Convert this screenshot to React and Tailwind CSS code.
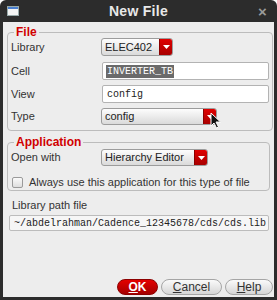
import React, { useState } from 'react';

const Dropdown = ({ value, width, height = 'h-[18px]' }) => (
  <div
    className={`${width} ${height} flex items-stretch rounded-[3px] border border-[#9c9c9c] bg-gradient-to-b from-[#fdfdfd] to-[#dadada] overflow-hidden`}
  >
    <span className="flex-1 pl-[3px] text-[11px] flex items-center text-[#222] whitespace-nowrap">{value}</span>
    <span className="w-[13px] flex items-center justify-center bg-gradient-to-b from-[#e00000] to-[#a80000] border-l border-[#8a0000]">
      <svg width="7" height="4" viewBox="0 0 7 4">
        <path d="M0 0h7L3.5 4z" fill="#fff" />
      </svg>
    </span>
  </div>
);

const Row = ({ label, children, className = '' }) => (
  <div className={`flex items-center ${className}`}>
    <span className="w-[90px] shrink-0 text-[11px] leading-none text-[#333]">{label}</span>
    {children}
  </div>
);

const Group = ({ title, children, className = '' }) => (
  <fieldset className={`border border-[#bcbcbc] rounded-[4px] px-[3px] ${className}`}>
    <legend className="ml-[3px] px-[2px] text-[12px] leading-[12px] font-bold text-[#d10000]">{title}</legend>
    {children}
  </fieldset>
);

const PillButton = ({ first, rest, primary, width }) => (
  <button
    className={`${width} h-[16px] rounded-full text-[12px] leading-[14px] border ${
      primary
        ? 'bg-gradient-to-b from-[#e40000] to-[#a50000] border-[#8c0000] text-white font-bold'
        : 'bg-gradient-to-b from-[#fafafa] to-[#d6d6d6] border-[#a5a5a5] text-[#333]'
    }`}
  >
    <span className="underline">{first}</span>
    {rest}
  </button>
);

export default function App() {
  const [always, setAlways] = useState(false);

  return (
    <div className="w-[277px] h-[300px] bg-[#2c2c2c] rounded-t-[6px] flex flex-col font-['Liberation_Sans',sans-serif]">
      {/* title bar */}
      <div className="h-[22px] shrink-0 flex items-center px-[7px]">
        <svg width="12" height="10" viewBox="0 0 12 10">
          <rect x="0.5" y="0.5" width="11" height="9" fill="#f4f4f4" stroke="#9aa" />
          <rect x="1" y="1" width="10" height="2" fill="#4a7fd0" />
        </svg>
        <span className="flex-1 text-center text-[14px] font-bold text-[#e8e8e8] tracking-[0.3px]">New File</span>
        <span className="w-[12px] text-[15px] leading-[15px] font-bold text-[#9a9a9a]">×</span>
      </div>

      {/* body */}
      <div className="flex-1 mx-[3px] mb-[3px] bg-[#ededed] px-[4px] pt-[4px] flex flex-col">
        <Group title="File" className="pb-[5px]">
          <Row label="Library">
            <Dropdown value="ELEC402" width="w-[72px]" />
          </Row>
          <Row label="Cell" className="mt-[6px]">
            <div className="ml-[1px] w-[167px] h-[18px] bg-white border border-[#b3b3b3] rounded-[2px] flex items-center pl-[3px]">
              <span className="bg-[#6a6a6a] text-white font-['Liberation_Mono',monospace] text-[10px] leading-[13px] px-[1px]">INVERTER_TB</span>
            </div>
          </Row>
          <Row label="View" className="mt-[5px]">
            <div className="ml-[1px] w-[167px] h-[18px] bg-white border border-[#b3b3b3] rounded-[2px] flex items-center pl-[4px]">
              <span className="text-[#222] font-['Liberation_Mono',monospace] text-[10px]">config</span>
            </div>
          </Row>
          <Row label="Type" className="mt-[5px] relative">
            <Dropdown value="config" width="w-[116px]" height="h-[17px]" />
            <svg className="absolute left-[199px] top-[4px]" width="12" height="17" viewBox="0 0 12 17">
              <path d="M1 1v13l3-3 2.5 5 2-1-2.5-5h4.5z" fill="#111" stroke="#fff" strokeWidth="1" />
            </svg>
          </Row>
        </Group>

        <Group title="Application" className="mt-[5px] pb-[2px]">
          <Row label="Open with" className="mt-[1px]">
            <Dropdown value="Hierarchy Editor" width="w-[107px]" height="h-[17px]" />
          </Row>
          <label className="mt-[11px] h-[11px] flex items-center gap-[6px] text-[11px] leading-none text-[#333]">
            <span
              onClick={() => setAlways(!always)}
              className="ml-[1px] w-[11px] h-[11px] border border-[#9a9a9a] rounded-[2px] bg-gradient-to-b from-[#fafafa] to-[#dedede]"
            />
            Always use this application for this type of file
          </label>
        </Group>

        <div className="mt-[8px] ml-[5px] text-[11px] leading-[13px] text-[#333]">Library path file</div>
        <div className="mt-[3px] ml-[2px] w-[260px] h-[16px] bg-[#f6f6f6] border border-[#bcbcbc] rounded-[2px] overflow-hidden flex justify-end items-center pr-[2px]">
          <span className="whitespace-nowrap font-['Liberation_Mono',monospace] text-[10px] text-[#222]">
            ~/abdelrahman/Cadence_12345678/cds/cds.lib
          </span>
        </div>

        <div className="mt-auto mb-[2px] -mr-[3px] flex justify-end gap-[3px]">
          <PillButton first="O" rest="K" primary width="w-[41px]" />
          <PillButton first="C" rest="ancel" width="w-[61px]" />
          <PillButton first="H" rest="elp" width="w-[48px]" />
        </div>
      </div>
    </div>
  );
}
